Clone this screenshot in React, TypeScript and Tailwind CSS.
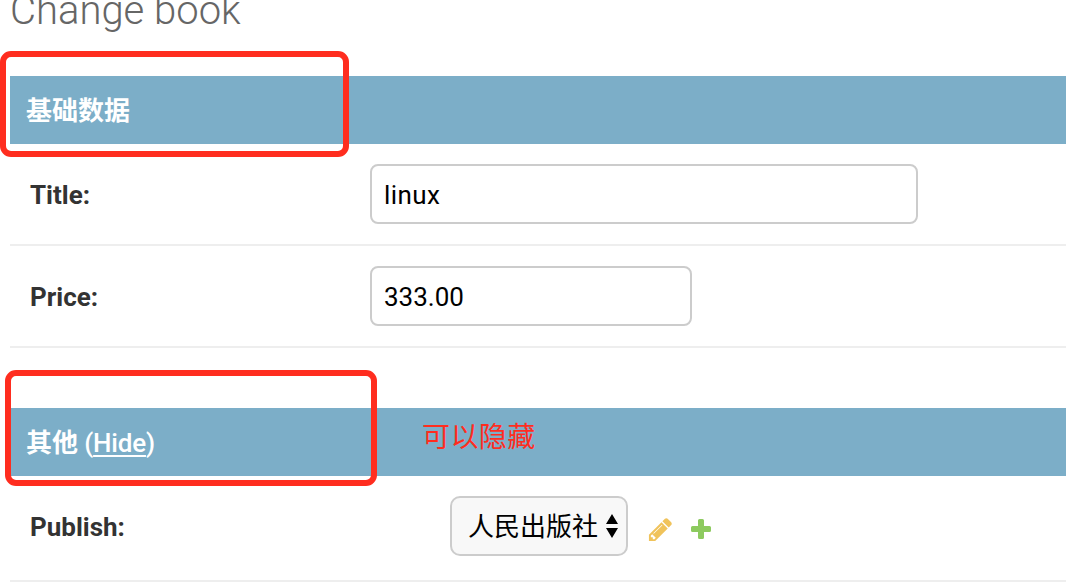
import type { ReactNode } from "react";

function Header({ children }: { children: ReactNode }) {
  return (
    <h2 className="ml-[10px] flex h-[68px] items-center bg-[#7caec8] pt-0.5 pl-4 text-[26px] font-medium text-white">
      {children}
    </h2>
  );
}

function Row({ label, tall = false, children }: { label: string; tall?: boolean; children: ReactNode }) {
  return (
    <div
      className={`ml-[10px] flex items-center border-b-2 border-[#eeeeee] pl-5 ${tall ? "h-[106px] pb-1" : "h-[102px]"}`}
    >
      <label className="w-[340px] shrink-0 pt-0.5 text-[26px] font-bold text-[#333333]">{label}</label>
      {children}
    </div>
  );
}

export default function App() {
  return (
    <main className="relative flex h-[586px] w-[1066px] flex-col overflow-hidden bg-white font-['Roboto','Noto_Sans_CJK_SC',sans-serif]">
      <div className="flex h-[76px] shrink-0 items-start pl-[10px]">
        <h1 className="-mt-3 text-[40px] leading-[46px] font-light text-[#666666]">Change book</h1>
      </div>
      <section>
        <Header>
          <span className="pt-px font-bold">基础数据</span>
        </Header>
        <Row label="Title:">
          <input
            defaultValue="linux"
            className="h-[60px] w-[548px] rounded-lg border-2 border-[#cccccc] px-3 pt-0.5 text-[26px] tracking-[0.4px] text-black"
          />
        </Row>
        <Row label="Price:">
          <input
            defaultValue="333.00"
            className="h-[60px] w-[322px] rounded-lg border-2 border-[#cccccc] px-3 pt-0.5 text-[26px] text-black"
          />
        </Row>
      </section>
      <section className="mt-[60px]">
        <Header>
          <span className="whitespace-pre">
            <span className="font-bold">其他</span>
            <span className="tracking-[-0.2px]">
              {" ("}
              <a className="underline decoration-2 underline-offset-[3px]">Hide</a>)
            </span>
          </span>
        </Header>
        <Row label="Publish:" tall>
          <button className="ml-20 flex h-[60px] w-[178px] items-center rounded-[10px] border-2 border-[#cccccc] bg-[#f8f8f8] pl-4 text-[26px] text-black">
            <span className="pt-[3px]">人民出版社</span>
            <svg className="ml-2 h-6 w-3" viewBox="0 0 12 24">
              <path d="M6 0l6 10H0zM6 24l6-10H0z" />
            </svg>
          </button>
          <svg className="mt-[6px] ml-[19px] h-[27px] w-[27px]" viewBox="0 0 1792 1792" fill="#f0c35b">
            <path d="M491 1536l91-91-235-235-91 91v107h128v128h107zm523-928q0-22-22-22-10 0-17 7l-542 542q-7 7-7 17 0 22 22 22 10 0 17-7l542-542q7-7 7-17zm-54-192l416 416-832 832h-416v-416zm683 96q0 53-37 90l-166 166-416-416 166-165q36-38 90-38 53 0 91 38l235 234q37 39 37 91z" />
          </svg>
          <svg className="mt-[6px] ml-[17px] h-5 w-5" viewBox="0 0 20 20" fill="#8dca5f">
            <path d="M8.5 0h3Q13 0 13 1.500V7h5.500Q20 7 20 8.500v3Q20 13 18.500 13H13v5.500Q13 20 11.500 20h-3Q7 20 7 18.500V13H1.500Q0 13 0 11.500v-3Q0 7 1.500 7H7V1.500Q7 0 8.500 0z" />
          </svg>
        </Row>
      </section>
      <div className="absolute top-[51px] left-0 h-[106px] w-[349px] rounded-[11px] border-[6px] border-[#ff2d1f]" />
      <div className="absolute top-[370px] left-[5px] h-[116px] w-[372px] rounded-[11px] border-[6px] border-[#ff2d1f]" />
      <p className="absolute top-[417px] left-[422px] text-[28px] leading-[42px] tracking-[0.4px] text-[#ff2d1f]">可以隐藏</p>
    </main>
  );
}
